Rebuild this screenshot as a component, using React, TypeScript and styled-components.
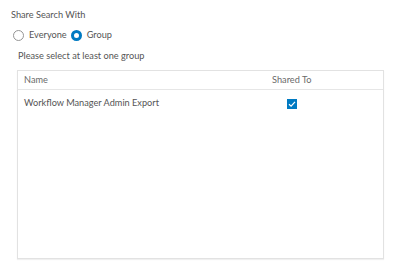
import styled, { createGlobalStyle } from 'styled-components'

const GlobalStyle = createGlobalStyle`
  html, body {
    margin: 0;
    padding: 0;
    background: #ffffff;
  }
  body {
    font-family: Lato, 'Liberation Sans', sans-serif;
    color: #4c4c4c;
  }
`

interface Group {
  name: string
  shared: boolean
}

const groups: Group[] = [{ name: 'Workflow Manager Admin Export', shared: true }]

export default function App() {
  return (
    <>
      <GlobalStyle />
      <Panel>
        <Title>Share Search With</Title>
        <RadioRow>
          <RadioLabel>
            <Radio $checked={false} />
            Everyone
          </RadioLabel>
          <RadioLabel>
            <Radio $checked />
            Group
          </RadioLabel>
        </RadioRow>
        <Hint>Please select at least one group</Hint>
        <TableBox>
          <Table>
            <thead>
              <tr>
                <Th>Name</Th>
                <Th $center>Shared To</Th>
              </tr>
            </thead>
            <tbody>
              {groups.map((g) => (
                <tr key={g.name}>
                  <Td>{g.name}</Td>
                  <Td $center>
                    <Check $checked={g.shared}>
                      {g.shared && (
                        <svg width="8" height="8" viewBox="0 0 8 8">
                          <path
                            d="M1 4.2 L3.1 6.2 L7 1.8"
                            fill="none"
                            stroke="#fff"
                            strokeWidth="1.2"
                          />
                        </svg>
                      )}
                    </Check>
                  </Td>
                </tr>
              ))}
            </tbody>
          </Table>
        </TableBox>
      </Panel>
    </>
  )
}

const Panel = styled.div`
  width: 400px;
  height: 272px;
  box-sizing: border-box;
  padding: 8px 16px 13px 11px;
  display: flex;
  flex-direction: column;
`

const Title = styled.div`
  font-size: 9.2px;
  line-height: 14px;
  color: #555555;
`

const RadioRow = styled.div`
  display: flex;
  gap: 4px;
  margin-top: 6px;
  padding-left: 2px;
`

const RadioLabel = styled.label`
  display: flex;
  align-items: center;
  gap: 5px;
  font-size: 9.2px;
  line-height: 14px;
  color: #555555;
`

const Radio = styled.span<{ $checked: boolean }>`
  width: 11px;
  height: 11px;
  box-sizing: border-box;
  border-radius: 50%;
  border: ${(p) => (p.$checked ? '3px solid #007ac2' : '1px solid #959595')};
  background: #fff;
`

const Hint = styled.div`
  margin-top: 7px;
  padding-left: 7px;
  font-size: 9.2px;
  line-height: 14px;
  color: #555555;
`

const TableBox = styled.div`
  margin-top: 7px;
  margin-left: 6px;
  flex: 1;
  border: 1px solid #e2e2e2;
  box-shadow: 0 1px 1px rgba(0, 0, 0, 0.06);
  background: #fff;
`

const Table = styled.table`
  width: 100%;
  border-collapse: collapse;
  table-layout: fixed;
`

const Th = styled.th<{ $center?: boolean }>`
  font-weight: normal;
  text-align: ${(p) => (p.$center ? 'center' : 'left')};
  font-size: 9.2px;
  line-height: 14px;
  color: #6a6a6a;
  padding: 2px 6px 2px;
  height: 14px;
  border-bottom: 1px solid #e6e6e6;
`

const Td = styled.td<{ $center?: boolean }>`
  text-align: ${(p) => (p.$center ? 'center' : 'left')};
  font-size: 9.2px;
  line-height: 14px;
  color: #555555;
  padding: 6px 6px;
  vertical-align: middle;
`

const Check = styled.span<{ $checked: boolean }>`
  display: inline-flex;
  align-items: center;
  justify-content: center;
  width: 10px;
  height: 10px;
  vertical-align: middle;
  box-sizing: border-box;
  background: ${(p) => (p.$checked ? '#007ac2' : '#fff')};
  border: 1px solid ${(p) => (p.$checked ? '#007ac2' : '#959595')};
`
